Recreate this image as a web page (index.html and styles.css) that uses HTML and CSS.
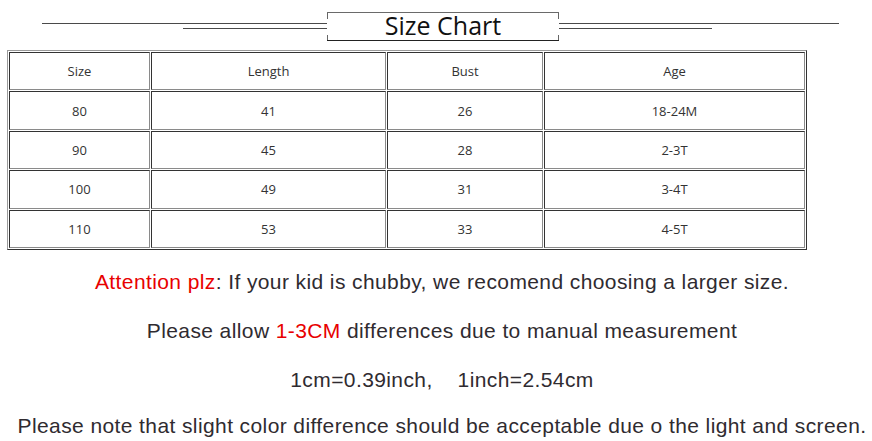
FILE: index.html
```html
<!DOCTYPE html>
<html>
<head>
<meta charset="utf-8">
<link rel="stylesheet" href="styles.css">
</head>
<body>
<header class="title-row">
  <div class="lines lines-left">
    <span class="line long"></span>
    <span class="line short-left"></span>
  </div>
  <h1 class="title">Size Chart</h1>
  <div class="lines lines-right">
    <span class="line long-right"></span>
    <span class="line short-right"></span>
  </div>
</header>
<div class="table-wrap">
<table class="chart">
  <tr><td class="c1">Size</td><td class="c2">Length</td><td class="c3">Bust</td><td class="c4">Age</td></tr>
  <tr><td>80</td><td>41</td><td>26</td><td>18-24M</td></tr>
  <tr><td>90</td><td>45</td><td>28</td><td>2-3T</td></tr>
  <tr><td>100</td><td>49</td><td>31</td><td>3-4T</td></tr>
  <tr><td>110</td><td>53</td><td>33</td><td>4-5T</td></tr>
</table>
</div>
<section class="notes">
  <p><span class="red">Attention plz</span>: If your kid is chubby, we recomend choosing a larger size.</p>
  <p>Please allow <span class="red">1-3CM</span> differences due to manual measurement</p>
  <p>1cm=0.39inch,&nbsp;&nbsp;&nbsp; 1inch=2.54cm</p>
  <p class="last">Please note that slight color difference should be acceptable due o the light and screen.</p>
</section>
</body>
</html>
```
FILE: styles.css
```css
html, body {
  margin: 0;
  padding: 0;
  background: #fff;
}
body {
  width: 872px;
  height: 441px;
  overflow: hidden;
}
.title-row {
  display: flex;
  align-items: flex-start;
  margin-top: 12px;
  padding-left: 42px;
  height: 29px;
}
.lines {
  display: flex;
  flex-direction: column;
  gap: 4px;
  padding-top: 11px;
}
.lines-left {
  width: 285px;
  align-items: flex-end;
}
.lines-right {
  width: 280px;
  align-items: flex-start;
}
.line {
  display: block;
  height: 1px;
  background: #4a4a4a;
}
.long { width: 285px; }
.short-left { width: 144px; }
.long-right { width: 280px; }
.short-right { width: 153px; }
.title {
  margin: 0;
  box-sizing: border-box;
  width: 232px;
  height: 29px;
  border-top: 1px solid #6a6a6a;
  border-bottom: 1px solid #222;
  background:
    linear-gradient(#666, #666) left top / 1px 6px no-repeat,
    linear-gradient(#666, #666) left bottom / 1px 5px no-repeat,
    linear-gradient(#666, #666) right top / 1px 6px no-repeat,
    linear-gradient(#666, #666) right bottom / 1px 5px no-repeat;
  font-family: "Open Sans", sans-serif;
  font-weight: normal;
  font-size: 25px;
  line-height: 25px;
  padding-bottom: 2px;
  text-align: center;
  color: #111;
}
.table-wrap {
  padding-left: 7px;
  margin-top: 9px;
}
.chart {
  border-collapse: separate;
  border-spacing: 1px;
  border: 1px solid;
  border-color: #9a9a9a #333 #333 #9a9a9a;
  width: 800px;
  font-family: "Open Sans", sans-serif;
  font-size: 13px;
  color: #333;
}
.chart td {
  box-sizing: border-box;
  border: 1px solid;
  border-color: #333 #8a8a8a #8a8a8a #333;
  height: 38.4px;
  padding: 0;
  text-align: center;
  vertical-align: middle;
}
.chart .c1 { width: 141px; }
.chart .c2 { width: 235px; }
.chart .c3 { width: 156px; }
.chart .c4 { width: 261px; }
.notes {
  display: flex;
  flex-direction: column;
  gap: 26px;
  padding-left: 12px;
  margin-top: 20px;
  font-family: "Liberation Sans", Arial, sans-serif;
  font-size: 21px;
  letter-spacing: 0.4px;
  color: #2f2b30;
}
.notes p {
  margin: 0;
  line-height: 23px;
  text-align: center;
  white-space: nowrap;
}
.notes p.last {
  margin-top: -3px;
}
.red {
  color: #e80000;
}
```
